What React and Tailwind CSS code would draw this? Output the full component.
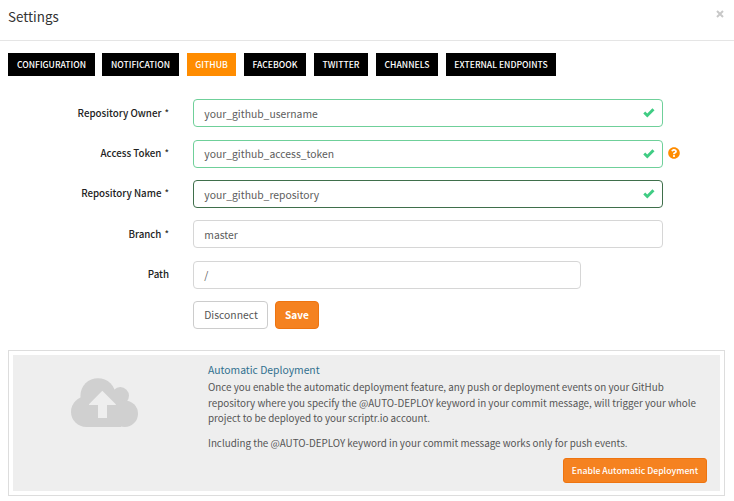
import { FaQuestionCircle } from "react-icons/fa";

const tabs = [
  { label: "CONFIGURATION", width: "w-[87px]" },
  { label: "NOTIFICATION", width: "-ml-px w-[77px]" },
  { label: "GITHUB", width: "w-[49px]", active: true },
  { label: "FACEBOOK", width: "w-[62px]" },
  { label: "TWITTER", width: "w-[54px]" },
  { label: "CHANNELS", width: "w-[62px]" },
  { label: "EXTERNAL ENDPOINTS", width: "w-[110px]" },
];

const fields = [
  { label: "Repository Owner", required: true, value: "your_github_username", valid: true, style: "w-[470px] border-[#6fd09a]" },
  { label: "Access Token", required: true, value: "your_github_access_token", valid: true, help: true, style: "w-[470px] border-[#6fd09a]" },
  { label: "Repository Name", required: true, value: "your_github_repository", valid: true, style: "w-[470px] border-[#3f6f4b]" },
  { label: "Branch", required: true, value: "master", style: "w-[470px] border-[#d6d6d6]" },
  { label: "Path", value: "/", style: "w-[388px] border-[#d6d6d6]" },
];

function Check() {
  return (
    <svg className="ml-auto h-[10px] w-[12px]" viewBox="0 0 12 10">
      <path d="M0.3 5.4 2.2 3.5 4.3 5.6 9.4 0.3 11.5 2.3 4.3 9.6Z" fill="#3fcc83" />
    </svg>
  );
}

function CloudUpload() {
  return (
    <svg className="mt-[23px] ml-[58px] h-[50px] w-[68px]" viewBox="0 0 68 50">
      <g fill="#d0d0d0">
        <circle cx="15.3" cy="33.7" r="15.3" />
        <circle cx="27" cy="17.8" r="17.6" />
        <circle cx="49.3" cy="17.8" r="8.7" />
        <circle cx="53.7" cy="35.7" r="13.3" />
        <path d="M15 20H50V49H15Z" />
      </g>
      <path d="M31.3 12.7 44.8 26.3V27H36V40H27V27H18V26.3Z" fill="#eee" />
    </svg>
  );
}

export default function App() {
  return (
    <div className="h-[501px] w-[734px] overflow-hidden bg-white font-['Noto_Sans_CJK_SC',sans-serif] text-[#555]">
      <header className="flex h-[41px] justify-between border-b border-[#e5e5e5] pr-[10px] pl-[8px]">
        <h1 className="pt-[6px] text-[13.4px] leading-[20px] text-[#333]">Settings</h1>
        <svg className="mt-[10px] h-[8px] w-[8px]" viewBox="0 0 8 8">
          <path d="M1 1 7 7M7 1 1 7" stroke="#c8c8c8" strokeWidth="2" />
        </svg>
      </header>

      <nav className="mt-[12px] ml-[8px] flex h-[23px] gap-[8px]">
        {tabs.map((tab) => (
          <button
            key={tab.label}
            className={`flex shrink-0 items-center justify-center whitespace-nowrap text-[8.62px] leading-[23px] font-medium text-white ${tab.width} ${tab.active ? "bg-[#ff8c00]" : "bg-black"}`}
          >
            {tab.label}
          </button>
        ))}
      </nav>

      <main className="mt-[23.3px] flex flex-col gap-[12px]">
        {fields.map((field) => (
          <div key={field.label} className="flex h-[28.4px]">
            <label className="mr-[24px] w-[169px] pt-[4.3px] text-right text-[9.75px] leading-[18px] font-medium text-[#222]">
              {field.label}
              {field.required && <span className="ml-[3px] font-normal">*</span>}
            </label>
            <div className={`flex h-[28px] items-center rounded-[4px] border bg-white pr-[7px] pl-[10.3px] text-[10.36px] leading-[20px] text-[#5c5c5c] ${field.style}`}>
              <span className="pt-[1px]">{field.value}</span>
              {field.valid && <Check />}
            </div>
            {field.help && <FaQuestionCircle className="mt-[7px] ml-[5px] h-[12px] w-[12px] text-[#ff8c00]" />}
          </div>
        ))}
        <div className="ml-[193px] flex h-[28px] gap-[7px] text-[10.36px]">
          <button className="h-[28px] w-[75px] rounded-[4px] border border-[#ccc] bg-white pl-[1px] leading-[20px]">Disconnect</button>
          <button className="h-[28px] w-[44px] rounded-[4px] border border-[#ee7410] bg-[#f58220] text-[10.1px] leading-[20px] font-bold text-white">Save</button>
        </div>
      </main>

      <section className="mt-[20.7px] ml-[8px] h-[146px] w-[717px] border border-[#ddd] p-[4px]">
        <div className="flex h-full bg-[#eee]">
          <div className="w-[195px] shrink-0">
            <CloudUpload />
          </div>
          <div className="flex flex-1 flex-col pt-[7px] text-[9.83px] leading-[15.5px]">
            <h2 className="text-[10.36px] text-[#31708f]">Automatic Deployment</h2>
            <p className="mt-[3px] whitespace-nowrap">
              Once you enable the automatic deployment feature, any push or deployment events on your GitHub
              <br />
              repository where you specify the @AUTO-DEPLOY keyword in your commit message, will trigger your whole
              <br />
              project to be deployed to your scriptr.io account.
            </p>
            <p className="mt-[8.7px] whitespace-nowrap">
              Including the @AUTO-DEPLOY keyword in your commit message works only for push events.
            </p>
            <button className="mt-[7.3px] mr-[13px] h-[25px] w-[144px] self-end rounded-[3px] border border-[#ee7410] bg-[#f58220] text-[8.7px] leading-[20px] font-medium whitespace-nowrap text-white">
              Enable Automatic Deployment
            </button>
          </div>
        </div>
      </section>
    </div>
  );
}
